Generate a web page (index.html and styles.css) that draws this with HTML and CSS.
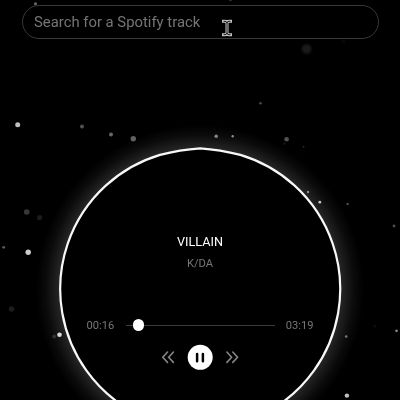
FILE: index.html
```
<!DOCTYPE html>
<html lang="en">
<head>
<meta charset="utf-8">
<title>Music visualizer</title>
<link rel="stylesheet" href="styles.css">
</head>
<body>
<svg class="scene" viewBox="0 0 400 400" aria-hidden="true">
  <defs>
    <radialGradient id="glow" gradientUnits="userSpaceOnUse" cx="200" cy="289" r="164">
      <stop offset="0.85" stop-color="#282828"/>
      <stop offset="0.89" stop-color="#1b1b1b"/>
      <stop offset="0.94" stop-color="#0b0b0b"/>
      <stop offset="1" stop-color="#000"/>
    </radialGradient>
    <filter id="soft" x="-50%" y="-50%" width="200%" height="200%"><feGaussianBlur stdDeviation="0.45"/></filter>
    <filter id="haze" x="-50%" y="-50%" width="200%" height="200%"><feGaussianBlur stdDeviation="1.2"/></filter>
  </defs>
  <circle cx="200" cy="289" r="164" fill="url(#glow)"/>
  <path class="ring" d="M200.2 148.4Q180 149.8 160 154.9A140 140 0 1 0 240.4 154.9Q220 149.8 200.2 148.4Z"/>
  <g fill="#fff" filter="url(#soft)">
    <circle cx="17.7" cy="124.8" r="2.5" opacity=".75"/>
    <circle cx="82" cy="126.5" r="2" opacity=".32"/>
    <circle cx="111" cy="134.4" r="2" opacity=".4"/>
    <circle cx="133.3" cy="138.8" r="2.7" opacity=".38"/>
    <circle cx="26.7" cy="212" r="2.8" opacity=".22"/>
    <circle cx="39.6" cy="217.5" r="2.6" opacity=".11"/>
    <circle cx="3.7" cy="247.3" r="1.4" opacity=".35"/>
    <circle cx="28.2" cy="252.3" r="2.7" opacity=".8"/>
    <circle cx="11.5" cy="309" r="2.7" opacity=".11"/>
    <circle cx="54.2" cy="336.5" r="2" opacity=".15"/>
    <circle cx="59.5" cy="334.7" r="2.3" opacity=".85"/>
    <circle cx="260.5" cy="103.3" r="1.3" opacity=".28"/>
    <circle cx="216.2" cy="136.3" r="1.8" opacity=".5"/>
    <circle cx="232.7" cy="136.3" r="1.2" opacity=".55"/>
    <circle cx="286.6" cy="139.2" r="2.3" opacity=".32"/>
    <circle cx="284.4" cy="143.7" r="1" opacity=".13"/>
    <circle cx="303.5" cy="146.7" r="1" opacity=".15"/>
    <circle cx="308" cy="192" r="1.2" opacity=".5"/>
    <circle cx="319.8" cy="202.2" r="1.4" opacity=".75"/>
    <circle cx="347.6" cy="204" r="1.3" opacity=".28"/>
    <circle cx="394" cy="226" r="1.4" opacity=".3"/>
    <circle cx="396.5" cy="330.8" r="1.4" opacity=".5"/>
    <circle cx="346.2" cy="336.5" r="1.3" opacity=".45"/>
    <circle cx="375" cy="326.3" r="1.2" opacity=".06"/>
    <circle cx="346.9" cy="395.6" r="2.2" opacity=".75"/>
    <circle cx="35.5" cy="3.8" r="1.6" opacity=".4"/>
    <circle cx="230.5" cy="0" r="1.3" opacity=".2"/>
    <circle cx="343.5" cy="41.5" r="2" opacity=".03"/>
  </g>
  <circle cx="306.7" cy="49" r="4.8" fill="#fff" opacity=".1" filter="url(#haze)"/>
</svg>
<main class="app">
  <input class="search" type="text" placeholder="Search for a Spotify track" aria-label="Search for a Spotify track">
  <section class="player">
    <h1 class="title">VILLAIN</h1>
    <p class="artist">K/DA</p>
    <div class="progress">
      <span class="time">00:16</span>
      <div class="track"><span class="thumb"></span></div>
      <span class="time">03:19</span>
    </div>
    <div class="controls">
      <svg class="skip" viewBox="0 0 14 14"><path d="M6.5 2L1.8 7.2l4.7 5.2M12.4 2L7.7 7.2l4.7 5.2"/></svg>
      <svg class="pause" viewBox="0 0 26 26"><circle cx="13.2" cy="13.3" r="12.5"/><path d="M10.1 10v7.2M15.9 10v7.2"/></svg>
      <svg class="skip" viewBox="0 0 14 14"><path d="M1.9 2L6.6 7.2l-4.7 5.2M7.8 2L12.5 7.2l-4.7 5.2"/></svg>
    </div>
  </section>
</main>
<svg class="cursor" viewBox="0 0 12 20"><path class="cursor-edge" d="M2.5 3.3H4Q6 3.3 6 5.5Q6 3.3 8 3.3H9.5M6 5.5v9M2.5 16.7H4Q6 16.7 6 14.5Q6 16.7 8 16.7H9.5"/><path class="cursor-core" d="M2.5 3.3H4Q6 3.3 6 5.5Q6 3.3 8 3.3H9.5M6 5.5v9M2.5 16.7H4Q6 16.7 6 14.5Q6 16.7 8 16.7H9.5"/></svg>
</body>
</html>
```
FILE: styles.css
```
* { box-sizing: border-box; }
body {
  margin: 0;
  height: 400px;
  overflow: hidden;
  background: #000;
  color: #fff;
  font-family: Roboto, sans-serif;
}
.scene {
  position: absolute;
  inset: 0;
  width: 400px;
  height: 400px;
}
.ring {
  fill: #000;
  stroke: #f8f8f8;
  stroke-width: 2.2;
  stroke-linejoin: round;
}
.app {
  position: relative;
  display: flex;
  flex-direction: column;
  align-items: center;
  padding-top: 5px;
}
.search {
  width: 357px;
  height: 34px;
  margin-left: 1px;
  padding: 0 11px 1px;
  border: 1px solid #383838;
  border-radius: 17px;
  background: transparent;
  color: #fff;
  font: 14.85px Roboto, sans-serif;
  outline: 0;
}
.search::placeholder { color: #757575; opacity: 1; }
.player {
  display: flex;
  flex-direction: column;
  align-items: center;
  width: 227px;
  padding-top: 194px;
}
.title {
  margin: 0;
  font-size: 12.7px;
  line-height: 17px;
  font-weight: 400;
}
.artist {
  margin: 5px 0 0;
  color: #777;
  font-size: 11.2px;
  line-height: 17px;
}
.progress {
  display: flex;
  align-items: center;
  justify-content: space-between;
  width: 100%;
  height: 16px;
  margin-top: 45px;
}
.time { color: #777; font-size: 11.1px; }
.track {
  position: relative;
  width: 149px;
  height: 1px;
  background: #3c3c3c;
}
.thumb {
  position: absolute;
  left: 7px;
  top: -5.5px;
  width: 11.5px;
  height: 11.5px;
  border-radius: 50%;
  background: #fff;
}
.controls {
  display: flex;
  align-items: center;
  gap: 12px;
  margin-top: 11px;
}
.skip {
  width: 14px;
  height: 14px;
  fill: none;
  stroke: #858585;
  stroke-width: 1.6;
  stroke-linecap: round;
}
.pause { width: 26px; height: 26px; fill: #fff; overflow: visible; }
.pause path { stroke: #000; stroke-width: 2.5; stroke-linecap: round; }
.cursor {
  position: absolute;
  left: 221px;
  top: 18px;
  width: 12px;
  height: 20px;
  fill: none;
}
.cursor-edge { stroke: #c4c4c4; stroke-width: 3; stroke-linecap: square; }
.cursor-core { stroke: #171717; stroke-width: 1; }
```
